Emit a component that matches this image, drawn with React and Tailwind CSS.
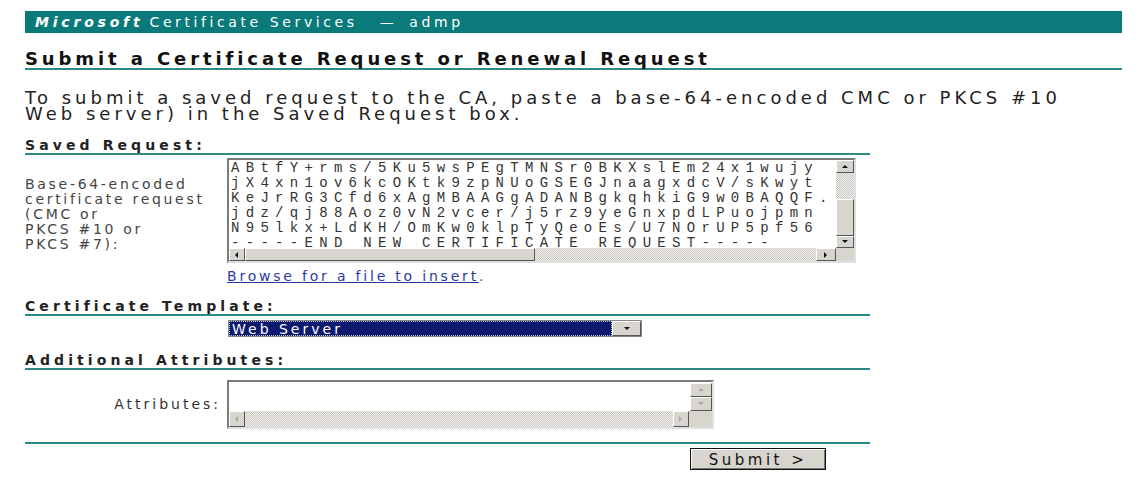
import React from "react";

const TEAL_LINE = "border-b-2 border-[#2f8a86]";
const STIPPLE = "bg-[repeating-conic-gradient(#c9c6bf_0_25%,#f4f3f0_0_50%)] bg-[length:2px_2px]";

const requestLines = [
  "ABtfY+rms/5Ku5wsPEgTMNSr0BKXslEm24x1wujy",
  "jX4xn1ov6kcOKtk9zpNUoGSEGJnaagxdcV/sKwyt",
  "KeJrRG3Cfd6xAgMBAAGgADANBgkqhkiG9w0BAQQF.",
  "jdz/qj88Aoz0vN2vcer/j5rz9yeGnxpdLPuojpmn",
  "N95lkx+LdKH/OmKw0klpTyQeoEs/U7NOrUP5pf56",
  "-----END NEW CERTIFICATE REQUEST-----",
];

function Arrow({ dir, muted }) {
  const fill = muted ? "#a8a8a8" : "#111";
  const pts = {
    up: "1,5 4,2 7,5",
    down: "1,2 4,5 7,2",
    left: "5,1 2,4 5,7",
    right: "2,1 5,4 2,7",
  }[dir];
  return (
    <svg width="8" height="8" viewBox="0 0 8 8">
      <polygon points={pts} fill={fill} />
    </svg>
  );
}

function ScrollBtn({ dir, muted, className = "" }) {
  return (
    <div
      className={`flex items-center justify-center bg-[#d8d5ce] border border-t-white border-l-white border-r-[#555] border-b-[#555] ${className}`}
    >
      <Arrow dir={dir} muted={muted} />
    </div>
  );
}

function SectionHead({ children, className = "" }) {
  return (
    <div className={`w-[845px] ${TEAL_LINE} font-bold text-[14px] leading-[15px] tracking-[4.1px] text-[#222] ${className}`}>
      {children}
    </div>
  );
}

export default function App() {
  return (
    <div className="w-[1138px] h-[484px] overflow-hidden bg-white text-[#333] font-['DejaVu_Sans',Verdana,sans-serif]">
      <div className="pl-[25px] pt-[11px]">
        <div className="w-[1097px] h-[22px] bg-[#0a7a7a] flex items-center pl-[10px] text-white text-[14px] tracking-[3.6px]">
          <span className="font-bold italic tracking-[3.8px]">Microsoft</span>
          <span className="ml-[6px]">Certificate Services</span>
          <span className="ml-[22px]">—</span>
          <span className="ml-[12px]">admp</span>
        </div>

        <div className={`mt-[16px] w-[1097px] ${TEAL_LINE} font-bold text-[18px] leading-[19px] tracking-[3.9px] text-[#111]`}>
          Submit a Certificate Request or Renewal Request
        </div>

        <p className="mt-[20px] text-[18px] leading-[16px] tracking-[4px] text-[#222]">
          To submit a saved request to the CA, paste a base-64-encoded CMC or PKCS #10
          <br />
          Web server) in the Saved Request box.
        </p>

        <SectionHead className="mt-[16px]">Saved Request:</SectionHead>

        <div className="flex mt-[3px]">
          <div className="w-[202px] pt-[19px] text-[14px] leading-[15px] tracking-[2.7px] text-[#444]">
            Base-64-encoded
            <br />
            certificate request
            <br />
            (CMC or
            <br />
            PKCS #10 or
            <br />
            PKCS #7):
          </div>
          <div className="w-[629px] h-[105px] border-2 border-t-[#7a7a7a] border-l-[#7a7a7a] border-r-[#e0e0e0] border-b-[#e0e0e0] flex flex-col">
            <div className="flex flex-1 min-h-0">
              <div className="flex-1 overflow-hidden bg-white pl-[2px] pt-[1px] font-['Liberation_Mono','Courier_New',monospace] text-[14px] leading-[15px] tracking-[6.3px] text-[#333] whitespace-pre">
                {requestLines.map((line) => (
                  <div key={line}>{line}</div>
                ))}
              </div>
              <div className="w-[18px] flex flex-col">
                <ScrollBtn dir="up" className="h-[13px]" />
                <div className={`h-[26px] ${STIPPLE}`} />
                <div className="flex-1 bg-[#d8d5ce] border border-t-white border-l-white border-r-[#555] border-b-[#555]" />
                <ScrollBtn dir="down" className="h-[12px]" />
              </div>
            </div>
            <div className="flex h-[13px]">
              <ScrollBtn dir="left" className="w-[16px]" />
              <div className="w-[290px] bg-[#d8d5ce] border border-t-white border-l-white border-r-[#555] border-b-[#555]" />
              <div className={`flex-1 ${STIPPLE}`} />
              <ScrollBtn dir="right" className="w-[20px]" />
              <div className="w-[18px] bg-[#d8d5ce]" />
            </div>
          </div>
        </div>

        <div className="ml-[202px] mt-[5px] text-[14px] leading-[16px] tracking-[2.8px]">
          <a href="#" className="text-[#2b3a9e] underline">Browse for a file to insert</a>
          <span className="text-[#555]">.</span>
        </div>

        <SectionHead className="mt-[15px]">Certificate Template:</SectionHead>

        <div className="ml-[203px] mt-[4px] flex w-[414px] h-[17px] border border-[#888]">
          <div className="flex-1 bg-[#0c1a70] border border-dotted border-[#c8c8c8] flex items-center pl-[2px] text-white text-[14px] tracking-[3px] leading-[14px]">
            Web Server
          </div>
          <ScrollBtn dir="down" className="w-[29px]" />
        </div>

        <SectionHead className="mt-[16px]">Additional Attributes:</SectionHead>

        <div className="flex items-center mt-[10px]">
          <div className="w-[196px] text-right text-[14px] tracking-[3px] text-[#333]">Attributes:</div>
          <div className="ml-[6px] w-[487px] h-[49px] border-2 border-t-[#7a7a7a] border-l-[#7a7a7a] border-r-[#e0e0e0] border-b-[#e0e0e0] flex flex-col">
            <div className="flex flex-1 min-h-0">
              <div className="flex-1 bg-white" />
              <div className="w-[23px] flex flex-col items-center pt-[1px]">
                <ScrollBtn dir="up" muted className="w-[22px] h-[15px]" />
                <ScrollBtn dir="down" muted className="w-[22px] h-[14px]" />
              </div>
            </div>
            <div className="flex h-[16px]">
              <ScrollBtn dir="left" muted className="w-[16px]" />
              <div className={`flex-1 ${STIPPLE}`} />
              <ScrollBtn dir="right" muted className="w-[16px]" />
              <div className="w-[23px] bg-[#d8d5ce]" />
            </div>
          </div>
        </div>

        <div className={`mt-[13px] w-[845px] ${TEAL_LINE}`} />

        <div className="mt-[4px] ml-[665px]">
          <button className="w-[136px] h-[22px] bg-[#d8d5ce] border border-[#111] shadow-[inset_1px_1px_0_#fff,inset_-1px_-1px_0_#777] text-[15px] tracking-[3.5px] text-[#111]">
            Submit &gt;
          </button>
        </div>
      </div>
    </div>
  );
}
